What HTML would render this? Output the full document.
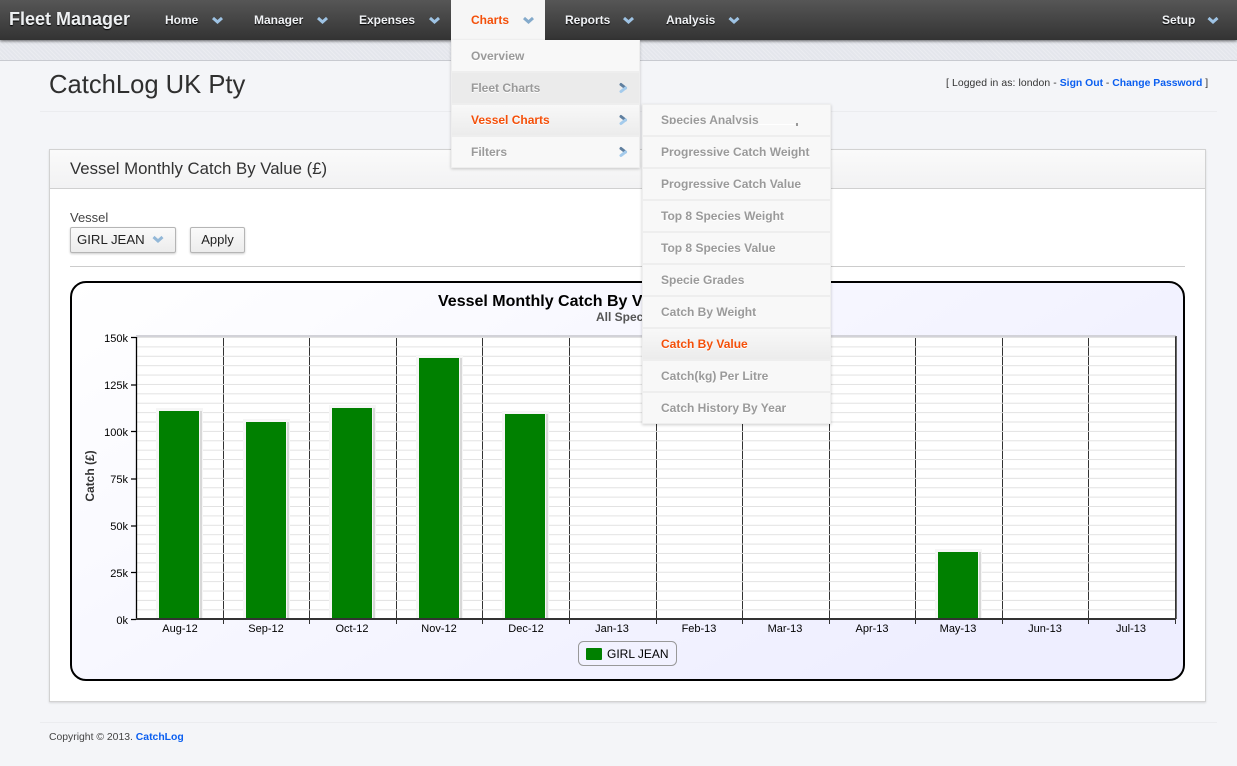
<!DOCTYPE html>
<html><head><meta charset="utf-8"><title>Fleet Manager</title>
<style>
html,body{margin:0;padding:0}
body{width:1237px;height:766px;position:relative;overflow:hidden;background:#f4f5f8;font-family:"Liberation Sans",sans-serif;color:#333}
.a{position:absolute;white-space:nowrap}
#nav{left:0;top:0;width:1237px;height:40px;background:linear-gradient(#565656,#333);box-shadow:0 1px 3px rgba(0,0,0,.6);z-index:3}
#band{left:0;top:40px;width:1237px;height:20px;background:#e4e6ec;background-image:repeating-linear-gradient(45deg,rgba(255,255,255,.25) 0 1px,transparent 1px 3px);border-bottom:1px solid #c8cad0}
.n{top:13px;font-size:12px;line-height:14px;font-weight:bold;color:#f0f2f5;text-shadow:0 1px 1px #000;z-index:4}
.m{z-index:5;background:#f8f8f8;box-sizing:border-box;width:187px;height:30px;font-size:12px;font-weight:bold;line-height:31px;padding-left:19px;color:#9a9a9a;text-shadow:0 1px 0 #fff}
.s{padding-left:18px}
.g{background:#ebebeb}
.h{background:linear-gradient(#f8f8f8,#ececec)}
.b{z-index:4;background:#eeeeee;box-shadow:0 1px 3px rgba(0,0,0,.2)}
a{color:#0a5ef0;font-weight:bold;text-decoration:none}
svg text{font-family:"Liberation Sans",sans-serif}
</style></head><body>
<div class="a" id="band"></div>
<div class="a" id="nav"></div>
<div class="a" style="left:9px;top:9px;font-size:18px;line-height:21px;font-weight:bold;color:#eef0f2;z-index:4;text-shadow:0 1px 1px #000">Fleet Manager</div>
<div class="a n" style="left:165px">Home</div>
<div class="a n" style="left:254px">Manager</div>
<div class="a n" style="left:359px">Expenses</div>
<div class="a" style="left:451px;top:0;width:94px;height:40px;background:#f6f6f6;z-index:4"></div>
<div class="a n" style="left:471px;color:#f4500a;text-shadow:none;z-index:5">Charts</div>
<div class="a n" style="left:565px">Reports</div>
<div class="a n" style="left:666px">Analysis</div>
<div class="a n" style="left:1162px">Setup</div>
<svg class="a" style="left:0;top:0;z-index:6" width="1237" height="60" fill="none" stroke="#9ec3e4" stroke-width="3">
<path d="M213 18l4.500 4 4.500-4M318 18l4.500 4 4.500-4M430 18l4.500 4 4.500-4M624 18l4.500 4 4.500-4M729.500 18l4.500 4 4.500-4M1208.500 18l4.500 4 4.500-4"/>
<path d="M524 18l4.500 4 4.500-4" stroke="#84aacb"/>
</svg>

<div class="a" style="left:49px;top:70px;font-size:25.6px;line-height:30px;color:#2f2f2f">CatchLog UK Pty</div>
<div class="a" style="left:946px;top:77px;font-size:10.4px;line-height:13px;color:#333"><span style="letter-spacing:.09px">[ Logged in as: london - </span><a href="#">Sign Out</a> - <a href="#">Change Password</a> ]</div>
<div class="a" style="left:40px;top:111px;width:1177px;height:1px;background:#ebecef"></div>

<div class="a" style="left:49px;top:149px;width:1155px;height:551px;background:#fff;border:1px solid #d2d2d2;box-shadow:0 1px 2px rgba(0,0,0,.12)"></div>
<div class="a" style="left:50px;top:150px;width:1155px;height:38px;background:linear-gradient(#fafafa,#f2f2f3);border-bottom:1px solid #d0d0d0"></div>
<div class="a" style="left:70px;top:159px;font-size:16.8px;line-height:20px;color:#333">Vessel Monthly Catch By Value (£)</div>
<div class="a" style="left:70px;top:210px;font-size:13px;line-height:15px;color:#444">Vessel</div>
<div class="a" style="left:70px;top:227px;width:104px;height:24px;background:linear-gradient(#fafafa,#ececec);border:1px solid #b5b5b5;border-radius:2px;box-shadow:0 1px 2px rgba(0,0,0,.2);font-size:13.2px;line-height:24px;color:#222;text-indent:6px">GIRL JEAN</div>
<svg class="a" style="left:150px;top:234px" width="16" height="12" fill="none" stroke="#93b8d8" stroke-width="3"><path d="M3.500 3l4.500 4 4.500-4"/></svg>
<div class="a" style="left:190px;top:227px;width:53px;height:24px;background:linear-gradient(#fafafa,#ececec);border:1px solid #b5b5b5;border-radius:2px;box-shadow:0 1px 2px rgba(0,0,0,.2);font-size:13px;line-height:24px;color:#222;text-align:center">Apply</div>
<div class="a" style="left:70px;top:266px;width:1115px;height:1px;background:#ccc"></div>

<svg class="a" style="left:70px;top:281px" width="1116" height="401" viewBox="70 281 1116 401">
<defs>
<linearGradient id="bg" x1="0" y1="0" x2="1" y2="0.6"><stop offset="0" stop-color="#fff"/><stop offset="1" stop-color="#eeeeff"/></linearGradient>
<pattern id="gr" x="0" y="337" width="10" height="9.39" patternUnits="userSpaceOnUse"><rect width="10" height="1" y="0" fill="#e2e2e2"/></pattern>
</defs>
<rect x="71" y="282" width="1113" height="398" rx="15" fill="url(#bg)" stroke="#000" stroke-width="2"/>
<rect x="136" y="337" width="1039" height="281" fill="#fff"/>
<rect x="136" y="335" width="1040" height="2" fill="#d2d2d8"/>
<rect x="1175" y="336" width="2" height="283" fill="#666"/>
<path d="M223.500 337V624M309.500 337V624M396.500 337V624M482.500 337V624M569.500 337V624M656.500 337V624M742.500 337V624M829.500 337V624M915.500 337V624M1002.500 337V624M1088.500 337V624M1175.500 337V624" stroke="#333" stroke-width="1" fill="none"/>
<rect x="137" y="337" width="1038" height="281" fill="url(#gr)"/>
<path d="M136.500 337V619M131 337.500h5M131 385h5M131 431.500h5M131 479h5M131 526h5M131 572.500h5M131 619.500h5" stroke="#000" stroke-width="1.300" fill="none"/>
<rect x="136" y="618" width="1040" height="2" fill="#333"/>
<g fill="#d8d8d8">
<rect x="156" y="408" width="47" height="210" fill="#f6f6f6"/><rect x="243" y="419" width="47" height="199" fill="#f6f6f6"/><rect x="329" y="405" width="47" height="213" fill="#f6f6f6"/><rect x="416" y="355" width="47" height="263" fill="#f6f6f6"/><rect x="502" y="411" width="47" height="207" fill="#f6f6f6"/><rect x="935" y="549" width="47" height="69" fill="#f6f6f6"/>
<rect x="200" y="411" width="2" height="207"/><rect x="287" y="422" width="2" height="196"/><rect x="373" y="408" width="2" height="210"/><rect x="460" y="358" width="2" height="260"/><rect x="546" y="414" width="2" height="204"/><rect x="979" y="552" width="2" height="66"/>
</g>
<g fill="#008000">
<rect x="159" y="411" width="40" height="207"/><rect x="246" y="422" width="40" height="196"/><rect x="332" y="408" width="40" height="210"/><rect x="419" y="358" width="40" height="260"/><rect x="505" y="414" width="40" height="204"/><rect x="938" y="552" width="40" height="66"/>
</g>
<g font-size="11" fill="#000" text-anchor="end">
<text x="128" y="342">150k</text><text x="128" y="389">125k</text><text x="128" y="436">100k</text><text x="128" y="483">75k</text><text x="128" y="530">50k</text><text x="128" y="577">25k</text><text x="128" y="624">0k</text>
</g>
<g font-size="11" fill="#000" text-anchor="middle">
<text x="180" y="632">Aug-12</text><text x="266" y="632">Sep-12</text><text x="352" y="632">Oct-12</text><text x="439" y="632">Nov-12</text><text x="526" y="632">Dec-12</text><text x="612" y="632">Jan-13</text><text x="699" y="632">Feb-13</text><text x="785" y="632">Mar-13</text><text x="872" y="632">Apr-13</text><text x="958" y="632">May-13</text><text x="1045" y="632">Jun-13</text><text x="1131" y="632">Jul-13</text>
</g>
<text x="438" y="306" font-size="16" font-weight="bold" fill="#000">Vessel Monthly Catch By Value (£)</text>
<text x="628" y="321" font-size="12" font-weight="bold" fill="#555" text-anchor="middle">All Species</text>
<text transform="translate(94 476) rotate(-90)" font-size="12" font-weight="bold" fill="#333" text-anchor="middle">Catch (£)</text>
<rect x="578.500" y="641.500" width="98" height="24" rx="5" fill="#f2f2ff" stroke="#999"/>
<rect x="586" y="648" width="16" height="12" rx="1" fill="#008000"/>
<text x="607" y="658" font-size="12" fill="#000">GIRL JEAN</text>
</svg>

<div class="a" style="left:40px;top:722px;width:1177px;height:1px;background:#ebecef"></div>
<div class="a" style="left:49px;top:731px;font-size:10.4px;line-height:13px;color:#444">Copyright © 2013. <a href="#">CatchLog</a></div>

<div class="a b" style="left:451px;top:40px;width:189px;height:128px"></div>
<div class="a m" style="left:452px;top:40px;height:31px;line-height:33px">Overview</div>
<div class="a m g" style="left:452px;top:73px">Fleet Charts</div>
<div class="a m h" style="left:452px;top:105px;color:#f4500a">Vessel Charts</div>
<div class="a m" style="left:452px;top:137px">Filters</div>

<div class="a b" style="left:642px;top:104px;width:189px;height:320px"></div>
<div class="a m s" style="left:643px;top:105px">Species Analysis</div>
<div class="a" style="left:643px;top:124px;width:187px;height:11px;background:#f8f8f8;z-index:6"></div>
<div class="a" style="left:759px;top:124px;width:36px;height:1px;background:#fff;z-index:7"></div>
<div class="a" style="left:796px;top:123px;width:2px;height:3px;background:#999;z-index:7"></div>
<div class="a m s" style="left:643px;top:137px">Progressive Catch Weight</div>
<div class="a m s" style="left:643px;top:169px">Progressive Catch Value</div>
<div class="a m s" style="left:643px;top:201px">Top 8 Species Weight</div>
<div class="a m s" style="left:643px;top:233px">Top 8 Species Value</div>
<div class="a m s" style="left:643px;top:265px">Specie Grades</div>
<div class="a m s" style="left:643px;top:297px">Catch By Weight</div>
<div class="a m s h" style="left:643px;top:329px;color:#f4500a">Catch By Value</div>
<div class="a m s" style="left:643px;top:361px">Catch(kg) Per Litre</div>
<div class="a m s" style="left:643px;top:393px">Catch History By Year</div>

<svg class="a" style="left:615px;top:78px;z-index:7" width="16" height="84" fill="none" stroke-width="3" stroke-linecap="round">
<path d="M6 6.500l4.500 3.500M6 38.500l4.500 3.500M6 70.500l4.500 3.500" stroke="#5f7f9f"/>
<path d="M10.500 10l-4.500 3.500M10.500 42l-4.500 3.500M10.500 74l-4.500 3.500" stroke="#a4cbec"/>
</svg>
</body></html>
